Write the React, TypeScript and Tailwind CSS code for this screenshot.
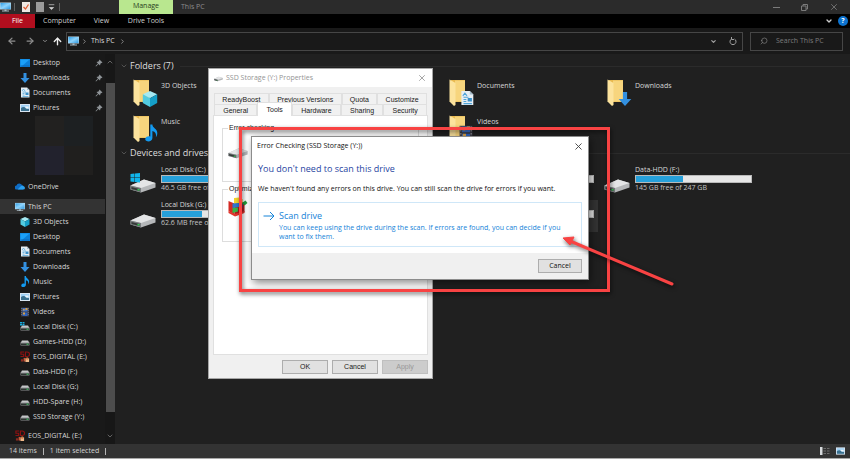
import { useState } from "react";
import type { ReactNode } from "react";
import clsx from "clsx";
import { FiArrowLeft, FiArrowRight, FiArrowUp, FiChevronDown, FiChevronRight, FiChevronUp, FiSearch, FiX } from "react-icons/fi";

interface IconProps {
  className?: string;
}

const MonitorIcon = ({ className = "w-[11px] h-[10px]" }: IconProps) => (
  <svg viewBox="0 0 22 20" className={className} aria-hidden="true">
    <defs>
      <linearGradient id="screen" x1="0" y1="0" x2="1" y2="1">
        <stop offset="0" stopColor="#2f9fe8" />
        <stop offset="0.5" stopColor="#8fd3fb" />
        <stop offset="1" stopColor="#2b97e0" />
      </linearGradient>
    </defs>
    <rect x="0" y="1" width="22" height="14" fill="#b9d7e8" />
    <rect x="1" y="2" width="20" height="12" fill="url(#screen)" />
    <path d="M9 15h4v2h5v2H4v-2h5z" fill="#a9bac4" />
  </svg>
);

const DesktopIcon = () => (
  <svg viewBox="0 0 20 16" className="w-[10px] h-2" aria-hidden="true">
    <rect width="20" height="16" fill="#0c7fd8" />
    <path d="M1 1h18L3 15H1z" fill="#1ba0f8" />
    <rect x="1" y="13" width="18" height="2" fill="#0a68b8" />
  </svg>
);

const DownIcon = ({ className = "w-[10px] h-[10px]" }: IconProps) => (
  <svg viewBox="0 0 20 20" className={className} aria-hidden="true">
    <path d="M7 0h6v10h6l-9 10-9-10h6z" fill="#3390e0" />
  </svg>
);

const DocIcon = ({ className = "w-[10px] h-[11px]" }: IconProps) => (
  <svg viewBox="0 0 20 22" className={className} aria-hidden="true">
    <path d="M2 1h12l5 5v15H2z" fill="#e6eef4" />
    <path d="M14 1v5h5z" fill="#a5bccb" />
    <path d="M4 8l3-4 3 4M5 10h7M5 13h4M5 16h4M5 19h12" stroke="#50a5d8" strokeWidth="1.5" fill="none" />
    <rect x="11" y="11" width="6" height="5" fill="#3a8fc8" />
  </svg>
);

const PictureIcon = ({ className = "w-[10px] h-2" }: IconProps) => (
  <svg viewBox="0 0 20 16" className={className} aria-hidden="true">
    <rect width="20" height="16" fill="#d9e6f2" />
    <rect x="2" y="2" width="16" height="12" fill="#9fd0f5" />
    <path d="M2 8q6-4 10 1l6 1v4H2z" fill="#3b718f" />
    <path d="M9 5h8v4h-4z" fill="#f0f6fa" />
  </svg>
);

const MusicIcon = ({ className = "w-[10px] h-[11px]" }: IconProps) => (
  <svg viewBox="0 0 20 24" className={className} aria-hidden="true">
    <path d="M9 0h3c0 5 7 6 7 12 0 3-1 5-2 6 1-5-1-8-5-9v10c0 3-3 5-6 5-3 0-5-2-4-4 1-3 4-4 7-3z" fill="#139af0" />
  </svg>
);

const VideoIcon = ({ className = "w-[10px] h-[10px]" }: IconProps) => (
  <svg viewBox="0 0 20 20" className={className} aria-hidden="true">
    <rect x="2" y="1" width="16" height="18" fill="#3c3c46" />
    <rect x="5" y="2" width="10" height="7" fill="#3a72d0" />
    <rect x="5" y="11" width="10" height="7" fill="#2d62bd" />
    <path d="M11 2h4v4h-4zM6 4h3v3H6zM6 11h4v4H6z" fill="#d6a04a" />
    <path d="M3.5 2v16M16.5 2v16" stroke="#8e8e96" strokeWidth="1.5" strokeDasharray="2 2" />
  </svg>
);

const CubeIcon = ({ className = "w-[10px] h-[10px]" }: IconProps) => (
  <svg viewBox="0 0 20 20" className={className} aria-hidden="true">
    <path d="M10 0l9 4-9 5-9-5z" fill="#a5eaf4" />
    <path d="M1 4l9 5v11l-9-5z" fill="#53cbe0" />
    <path d="M19 4l-9 5v11l9-5z" fill="#159fc8" />
  </svg>
);

const CloudIcon = () => (
  <svg viewBox="0 0 20 14" className="w-[10px] h-[7px]" aria-hidden="true">
    <path d="M4 13a4 4 0 0 1-1-8 6 6 0 0 1 11-1 5 5 0 0 1 2 9z" fill="#0f6cc4" />
    <path d="M5 13l6-6q2-2 5-1 4 1 4 4 0 3-4 3z" fill="#2ba0ee" />
  </svg>
);

const SmallDriveIcon = ({ system }: { system?: boolean }) => (
  <svg viewBox="0 0 20 18" className="w-[10px] h-[9px]" aria-hidden="true">
    <path d="M4 7h12l3 5H1z" fill="#c4c6c8" />
    <rect x="1" y="11" width="18" height="6" rx="1" fill="#8d9092" />
    <rect x="2" y="13" width="16" height="3" fill="#2c3330" />
    <rect x="13" y="13" width="4" height="3" fill="#3f9e58" />
    {system && <path d="M0 0h4v3H0zM5 0h4v3H5zM0 4h4v3H0zM5 4h4v3H5z" fill="#18aee0" />}
  </svg>
);

const CardIcon = () => (
  <svg viewBox="0 0 22 24" className="w-[11px] h-3" aria-hidden="true">
    <path d="M9 1H2v5h6v5H1M12 1h4q5 0 5 5t-5 5h-4z" stroke="#8c1111" strokeWidth="2.5" fill="none" />
    <path d="M2 17h5v5H2z" fill="#8e2b20" />
    <path d="M8 14h4v8H8z" fill="#c85537" />
    <path d="M12 15h8v8h-8z" fill="#f0b98a" />
    <path d="M14 13h4v5h-4z" fill="#d97842" />
  </svg>
);

const DriveIcon = ({ system, className = "w-[26px] h-5" }: IconProps & { system?: boolean }) => (
  <svg viewBox="0 0 52 40" className={className} aria-hidden="true">
    <path d="M1 25l27-12 23 7v9L22 39 1 33z" fill="#b5b7b9" />
    <path d="M1 25l27-12 23 7-29 10z" fill="#e4e5e6" />
    <path d="M1 25l21 5v9L1 33z" fill="#777b7d" />
    <path d="M3 28l16 4v4L3 32z" fill="#353a38" />
    <rect x="15" y="32" width="4" height="3" fill="#35d055" />
    {system && <path d="M1 2l8-1v8H1zM10 1l10-1v9H10zM1 10h8v8l-8-1zM10 10h10v9l-10-1z" fill="#10b4ea" />}
  </svg>
);

const FolderIcon = ({ children }: { children: ReactNode }) => (
  <span className="relative block h-7 w-[26px]">
    <svg viewBox="0 0 52 56" className="h-7 w-[26px]" aria-hidden="true">
      <path d="M6 2h28v44H8z" fill="#e9b94f" />
      <path d="M14 3h20v42H14z" fill="#f7d57d" />
      <path d="M3 1l12 7v44l-3 2-9-9z" fill="#fce39d" />
    </svg>
    <span className="absolute right-0 bottom-0">{children}</span>
  </span>
);

const quickAccess = [
  { name: "Desktop", icon: <DesktopIcon /> },
  { name: "Downloads", icon: <DownIcon /> },
  { name: "Documents", icon: <DocIcon /> },
  { name: "Pictures", icon: <PictureIcon /> },
];

const pcItems = [
  { name: "3D Objects", icon: <CubeIcon /> },
  { name: "Desktop", icon: <DesktopIcon /> },
  { name: "Documents", icon: <DocIcon /> },
  { name: "Downloads", icon: <DownIcon /> },
  { name: "Music", icon: <MusicIcon /> },
  { name: "Pictures", icon: <PictureIcon /> },
  { name: "Videos", icon: <VideoIcon /> },
  { name: "Local Disk (C:)", icon: <SmallDriveIcon system /> },
  { name: "Games-HDD (D:)", icon: <SmallDriveIcon /> },
  { name: "EOS_DIGITAL (E:)", icon: <CardIcon /> },
  { name: "Data-HDD (F:)", icon: <SmallDriveIcon /> },
  { name: "Local Disk (G:)", icon: <SmallDriveIcon /> },
  { name: "HDD-Spare (H:)", icon: <SmallDriveIcon /> },
  { name: "SSD Storage (Y:)", icon: <SmallDriveIcon /> },
];

const folders = [
  { name: "3D Objects", col: "col-start-1", icon: <CubeIcon className="w-4 h-4" /> },
  { name: "Documents", col: "col-start-3", icon: <DocIcon className="w-[14px] h-[18px]" /> },
  { name: "Downloads", col: "col-start-4", icon: <DownIcon className="w-[14px] h-4" /> },
  { name: "Music", col: "col-start-1", icon: <MusicIcon className="w-[14px] h-5" /> },
  { name: "Videos", col: "col-start-3", icon: <VideoIcon className="w-4 h-5" /> },
];

const drives = [
  { name: "Local Disk (C:)", free: "46.5 GB free of", used: 62, col: "col-start-1", system: true },
  { name: "", free: "", used: 0, col: "col-start-3" },
  { name: "Data-HDD (F:)", free: "145 GB free of 247 GB", used: 41, col: "col-start-4" },
  { name: "Local Disk (G:)", free: "62.6 MB free of", used: 35, col: "col-start-1" },
  { name: "", free: "", used: 0, col: "col-start-3", selected: true },
];

const PinIcon = () => (
  <svg viewBox="0 0 16 16" className="ml-auto h-2 w-2" aria-hidden="true">
    <path d="M9 1l6 6-2 1-2 1-1 4-3-3-5 5-1-1 5-5-3-3 4-1 1-2z" fill="#8f9498" />
  </svg>
);

interface NavItemProps {
  name: string;
  icon: ReactNode;
  indent?: boolean;
  pinned?: boolean;
  active?: boolean;
}

const NavItem = ({ name, icon, indent = true, pinned, active }: NavItemProps) => (
  <a
    href="#"
    className={clsx("flex h-[15px] shrink-0 items-center gap-[3px] pr-[2px] whitespace-nowrap", indent ? "pl-5" : "pl-[15px]", active && "bg-[#333333]")}
  >
    <span className="flex w-[10px] shrink-0 justify-center">{icon}</span>
    <span>{name}</span>
    {pinned && <PinIcon />}
  </a>
);

const Sidebar = () => (
  <aside className="flex w-[115px] shrink-0 bg-[#191919]">
    <nav className="flex min-w-0 flex-1 flex-col overflow-hidden pt-px">
      {quickAccess.map((item) => (
        <NavItem key={item.name} {...item} pinned />
      ))}
      <div className="mt-px mb-1 ml-[35px] grid h-[59px] w-[58px] shrink-0 grid-cols-2">
        <span className="bg-[#222120]" />
        <span className="bg-[#1d2022]" />
        <span className="bg-[#22222d]" />
        <span className="bg-[#201f1e]" />
      </div>
      <NavItem name="OneDrive" icon={<CloudIcon />} indent={false} />
      <div className="mt-[5px] mb-1">
        <NavItem name="This PC" icon={<MonitorIcon />} indent={false} active />
        {pcItems.map((item) => (
          <NavItem key={item.name} {...item} />
        ))}
      </div>
      <NavItem name="EOS_DIGITAL (E:)" icon={<CardIcon />} indent={false} />
    </nav>
    <div className="flex w-[10px] flex-col items-center bg-[#171717] text-[#8a8a8a]">
      <FiChevronUp className="my-1 h-2 w-2" />
      <div className="mt-[13px] mb-5 w-[9px] flex-1 bg-[#4d4d4d]" />
      <FiChevronDown className="mb-1 h-2 w-2" />
    </div>
  </aside>
);

const GroupHeader = ({ title }: { title: string }) => (
  <h2 className="flex h-4 items-center gap-[2px] text-[9px] text-[#dedede]">
    <FiChevronDown className="h-2 w-2 text-[#6b6b6b]" />
    <span className="whitespace-nowrap">{title}</span>
    <span className="ml-1 h-px flex-1 bg-[#2b2b2b]" />
  </h2>
);

const Browser = () => (
  <main className="min-w-0 flex-1 overflow-hidden bg-[#202020] pt-1 pl-[5px]">
    <GroupHeader title="Folders (7)" />
    <div className="grid grid-cols-[repeat(4,158px)] grid-rows-[36px_31px] pt-1 pl-3">
      {folders.map((folder) => (
        <div key={folder.name} className={clsx("flex gap-[3px] pt-px", folder.col)}>
          <FolderIcon>{folder.icon}</FolderIcon>
          <span className="pt-[2px]">{folder.name}</span>
        </div>
      ))}
    </div>
    <GroupHeader title="Devices and drives (7)" />
    <div className="grid auto-rows-[35px] grid-cols-[repeat(4,158px)] pt-1 pl-[10px]">
      {drives.map((drive, i) => (
        <div key={i} className={clsx("flex h-8 w-[152px] gap-[5px] whitespace-nowrap", drive.col, drive.selected && "bg-[#333333]")}>
          <DriveIcon system={drive.system} className="mt-2 h-5 w-[26px] shrink-0" />
          <div className="w-[117px]">
            <div className="h-[10px]">{drive.name}</div>
            <div className="h-2 border border-[#b9b9b9] bg-[#e6e6e6]">
              <div className="h-full bg-[#26a0da]" style={{ width: `${drive.used}%` }} />
            </div>
            <div className="text-[#c4c4c4]">{drive.free}</div>
          </div>
        </div>
      ))}
    </div>
  </main>
);

const TitleBar = () => (
  <header className="flex h-[14px] shrink-0 items-center bg-[#2b2b2b]">
    <div className="flex w-[119px] items-center">
      <MonitorIcon />
      <span className="ml-[3px] h-2 w-px bg-[#606060]" />
      <svg viewBox="0 0 16 20" className="ml-[7px] h-[10px] w-2" aria-hidden="true">
        <path d="M0 0h16v20H0z" fill="#eee9e4" />
        <path d="M3 10l4 4 6-9" stroke="#df5c31" strokeWidth="2.5" fill="none" />
      </svg>
      <span className="ml-[6px] h-[10px] w-2 bg-[#9b9b9b]" />
      <svg viewBox="0 0 10 10" className="ml-1 h-[7px] w-[7px]" aria-hidden="true">
        <path d="M1 1h8M2 5l3 3 3-3z" stroke="#d0d0d0" fill="#d0d0d0" />
      </svg>
      <span className="ml-1 h-2 w-px bg-[#606060]" />
    </div>
    <div className="flex h-full w-[54px] items-center justify-center bg-[#b9e78f] pb-[2px] text-[#29401c]">Manage</div>
    <h1 className="pl-2 text-[#8b8b8b]">This PC</h1>
    <div className="ml-auto flex items-center gap-[21px] pr-[11px] text-[#7b7b7b]">
      <button aria-label="Minimize" className="flex h-2 w-[7px] items-center">
        <span className="h-px w-full bg-[#7b7b7b]" />
      </button>
      <button aria-label="Restore" className="h-[7px] w-[7px]">
        <svg viewBox="0 0 14 14" className="h-full w-full" fill="none" stroke="currentColor" strokeWidth="2">
          <path d="M1 4h9v9H1zM4 4V1h9v9h-3" />
        </svg>
      </button>
      <button aria-label="Close"><FiX className="h-[10px] w-[10px]" /></button>
    </div>
  </header>
);

const Ribbon = () => (
  <nav className="flex h-[14px] shrink-0 items-center bg-black text-[#cfcfcf]">
    <a href="#" className="flex h-full w-[35px] items-center justify-center bg-[#b10e1e] text-white">File</a>
    <a href="#" className="w-[49px] text-center">Computer</a>
    <a href="#" className="w-[35px] text-center">View</a>
    <a href="#" className="w-[54px] text-center">Drive Tools</a>
    <button aria-label="Expand ribbon" className="ml-auto text-[#cccccc]"><FiChevronDown strokeWidth={4} className="h-2 w-2" /></button>
    <button aria-label="Help" className="mr-[2px] ml-[5px] flex h-[10px] w-[10px] items-center justify-center rounded-full bg-[#0c73d0] font-bold text-white">?</button>
  </nav>
);

const AddressBar = () => (
  <div className="flex h-[26px] shrink-0 items-center bg-[#191919] pr-[7px] pl-[7px]">
    <div className="flex w-[59px] items-center text-[#8d8d8d]">
      <button aria-label="Back"><FiArrowLeft strokeWidth={3} className="h-[10px] w-[10px]" /></button>
      <button aria-label="Forward" className="ml-2"><FiArrowRight strokeWidth={3} className="h-[10px] w-[10px]" /></button>
      <button aria-label="Recent" className="ml-[7px]"><FiChevronDown strokeWidth={4} className="h-[6px] w-[6px]" /></button>
      <button aria-label="Up" className="ml-1 text-[#eeeeee]"><FiArrowUp strokeWidth={3} className="h-[11px] w-[11px]" /></button>
    </div>
    <div className="flex h-[19px] flex-1 items-center border border-[#464646] px-px">
      <MonitorIcon />
      <FiChevronRight strokeWidth={3} className="ml-[2px] h-[7px] w-[7px] text-[#8d8d8d]" />
      <span className="ml-[3px] text-[#dddddd]">This PC</span>
      <FiChevronRight strokeWidth={3} className="ml-1 h-[7px] w-[7px] text-[#8d8d8d]" />
      <button aria-label="Previous locations" className="ml-auto text-[#a0a0a0]"><FiChevronDown strokeWidth={4} className="h-[7px] w-[7px]" /></button>
      <button aria-label="Refresh" className="mr-1 ml-3">
        <svg viewBox="0 0 16 16" className="h-2 w-2" fill="none" stroke="#a0a0a0" strokeWidth="2">
          <path d="M5 4a6 6 0 1 0 6 0M5 0v5h5" />
        </svg>
      </button>
    </div>
    <label className="ml-[7px] flex h-[19px] w-[93px] items-center border border-[#464646] pl-[9px] text-[#858585]">
      <FiSearch className="h-2 w-2 shrink-0 -scale-x-100" />
      <input type="search" aria-label="Search This PC" placeholder="Search This PC" className="ml-2 w-full min-w-0 bg-transparent outline-none placeholder:text-[#7c7c7c]" />
    </label>
  </div>
);

const StatusBar = () => (
  <footer className="flex h-[15px] shrink-0 items-center gap-[6px] border-b border-[#a8a8a8] bg-[#333333] pr-[5px] pl-[9px] text-[#d4d4d4]">
    <span>14 items</span>
    <span className="h-[7px] w-px bg-[#b5b5b5]" />
    <span>1 item selected</span>
    <span className="h-[7px] w-px bg-[#b5b5b5]" />
    <button aria-label="Details view" className="ml-auto">
      <svg viewBox="0 0 20 16" className="h-2 w-[10px]" aria-hidden="true">
        <path d="M0 0h5v16H0z" fill="#d7dadc" />
        <path d="M7 3h5M7 8h5M7 13h5M14 3h5M14 8h5M14 13h5" stroke="#6c6c6c" strokeWidth="2" />
      </svg>
    </button>
    <button aria-label="Large icons view"><PictureIcon className="h-2 w-[9px]" /></button>
  </footer>
);

const DefragIcon = () => (
  <svg viewBox="0 0 40 40" className="h-5 w-5" aria-hidden="true">
    <path d="M1 8l12 5v23L1 28z" fill="#d42a24" />
    <path d="M13 13l20-3v20l-20 8z" fill="#b31a1c" />
    <path d="M12 2l10-1v11l-10 2z" fill="#f2d22c" />
    <path d="M22 5l7-1v9l-7 1z" fill="#e4bb1c" />
    <path d="M9 13l13-1v8l-13 2z" fill="#2d77d0" />
    <path d="M22 13l7-1v9l-7 1z" fill="#1d5cb0" />
    <path d="M9 22l11-1v8l-11 3z" fill="#38b548" />
    <path d="M28 12l7-5 4 5-6 5z" fill="#23a03c" />
    <path d="M1 28l12 6 20-6v4l-19 7-13-7z" fill="#e0342b" />
  </svg>
);

const tabClass = "flex-auto border border-b-0 border-[#e0e0e0] px-1 text-center";

const PropertiesWindow = () => {
  const [tab, setTab] = useState("Tools");

  return (
    <section className="absolute top-[68px] left-[208px] w-[225px] border border-[#a5a5a5] bg-[#f0f0f0] font-['Liberation_Sans',sans-serif] text-[#202020]">
      <div className="flex h-[18px] items-center bg-white px-[5px] font-['Open_Sans',sans-serif] text-[#949494]">
        <DriveIcon className="h-2 w-[9px]" />
        <h2 className="ml-[3px]">SSD Storage (Y:) Properties</h2>
        <button aria-label="Close properties" className="ml-auto"><FiX className="h-[10px] w-[10px]" /></button>
      </div>
      <div className="px-1 pt-[6px]">
        <div className="flex h-[11px] px-px leading-[11px]">
          {["ReadyBoost", "Previous Versions", "Quota", "Customize"].map((name) => (
            <button key={name} onClick={() => setTab(name)} className={clsx(tabClass, "bg-[#f1f1f1]")}>{name}</button>
          ))}
        </div>
        <div className="flex h-[11px] px-px leading-[11px]">
          {["General", "Tools", "Hardware", "Sharing", "Security"].map((name) => (
            <button
              key={name}
              onClick={() => setTab(name)}
              className={clsx(tabClass, tab === name ? "z-10 -mt-[2px] -mb-px bg-white" : "bg-[#f1f1f1]")}
            >
              {name}
            </button>
          ))}
        </div>
        <div className="flex h-60 flex-col gap-[2px] border border-[#e0e0e0] bg-white px-2 pt-[7px]">
          <fieldset className="h-[59px] border border-[#dddddd] px-[5px]">
            <legend className="px-px leading-[10px]">Error checking</legend>
            <DriveIcon className="mt-[10px] h-4 w-5" />
          </fieldset>
          <fieldset className="h-[58px] border border-[#dddddd] px-[5px]">
            <legend className="px-px leading-[10px]">Optimize</legend>
            <div className="pt-[3px]">
              <DefragIcon />
            </div>
          </fieldset>
        </div>
        <div className="flex justify-end gap-1 pt-[5px] pb-1">
          <button className="h-[14px] w-[46px] border border-[#adadad] bg-[#e1e1e1]">OK</button>
          <button className="h-[14px] w-[46px] border border-[#adadad] bg-[#e1e1e1]">Cancel</button>
          <button disabled className="h-[14px] w-[46px] border border-[#bfbfbf] bg-[#cccccc] text-[#989898]">Apply</button>
        </div>
      </div>
    </section>
  );
};

const ErrorCheckingDialog = () => (
  <section role="dialog" aria-labelledby="error-title" className="absolute top-[136px] left-[251px] w-[338px] border border-[#8c8c8c] bg-white text-[#111111] shadow-[2px_3px_8px_rgba(0,0,0,0.45)]">
    <div className="flex h-[18px] items-center pr-1 pl-[5px]">
      <h2 id="error-title">Error Checking (SSD Storage (Y:))</h2>
      <button aria-label="Close" className="ml-auto text-[#444444]"><FiX className="h-[11px] w-[11px]" /></button>
    </div>
    <div className="px-[6px] pt-[6px] pb-[6px]">
      <h3 className="text-[9px] leading-4 text-[#1f449f]">You don't need to scan this drive</h3>
      <p className="mt-[7px] leading-[10px]">We haven't found any errors on this drive. You can still scan the drive for errors if you want.</p>
      <button className="mt-2 flex h-[45px] w-full items-start gap-1 border border-[#cfe7f8] pt-[6px] pl-1 text-left text-[#1583d8]">
        <svg viewBox="0 0 24 20" className="mt-[2px] h-[10px] w-3 shrink-0" fill="none" stroke="currentColor" strokeWidth="2" aria-hidden="true">
          <path d="M1 10h21M14 2l8 8-8 8" />
        </svg>
        <span className="pr-4">
          <span className="block text-[9px] leading-[14px]">Scan drive</span>
          <span className="block leading-[9px]">You can keep using the drive during the scan. If errors are found, you can decide if you want to fix them.</span>
        </span>
      </button>
    </div>
    <div className="flex justify-end bg-[#f0f0f0] px-[6px] py-[6px]">
      <button className="h-[14px] w-11 border border-[#adadad] bg-[#e1e1e1]">Cancel</button>
    </div>
  </section>
);

const Annotation = () => (
  <>
    <div className="pointer-events-none absolute top-[127px] left-[239px] h-[165px] w-[371px] border-3 border-[#f84343] drop-shadow-[1px_2px_2px_rgba(0,0,0,0.6)]" />
    <svg viewBox="0 0 112 50" className="pointer-events-none absolute top-[236px] left-[562px] h-[50px] w-28 drop-shadow-[1px_2px_2px_rgba(0,0,0,0.6)]" aria-hidden="true">
      <path d="M8 5l102 43" stroke="#f84343" strokeWidth="3" strokeLinecap="round" />
      <path d="M1 2l11-1-4 8z" fill="#f84343" stroke="#f84343" />
    </svg>
  </>
);

const App = () => {
  return (
    <div className="relative flex h-screen flex-col overflow-hidden bg-[#202020] font-['Open_Sans',sans-serif] text-[7px] leading-[10px] text-[#d8d8d8]">
      <TitleBar />
      <Ribbon />
      <AddressBar />
      <div className="flex min-h-0 flex-1">
        <Sidebar />
        <Browser />
      </div>
      <StatusBar />
      <PropertiesWindow />
      <ErrorCheckingDialog />
      <Annotation />
    </div>
  );
};

export default App;
